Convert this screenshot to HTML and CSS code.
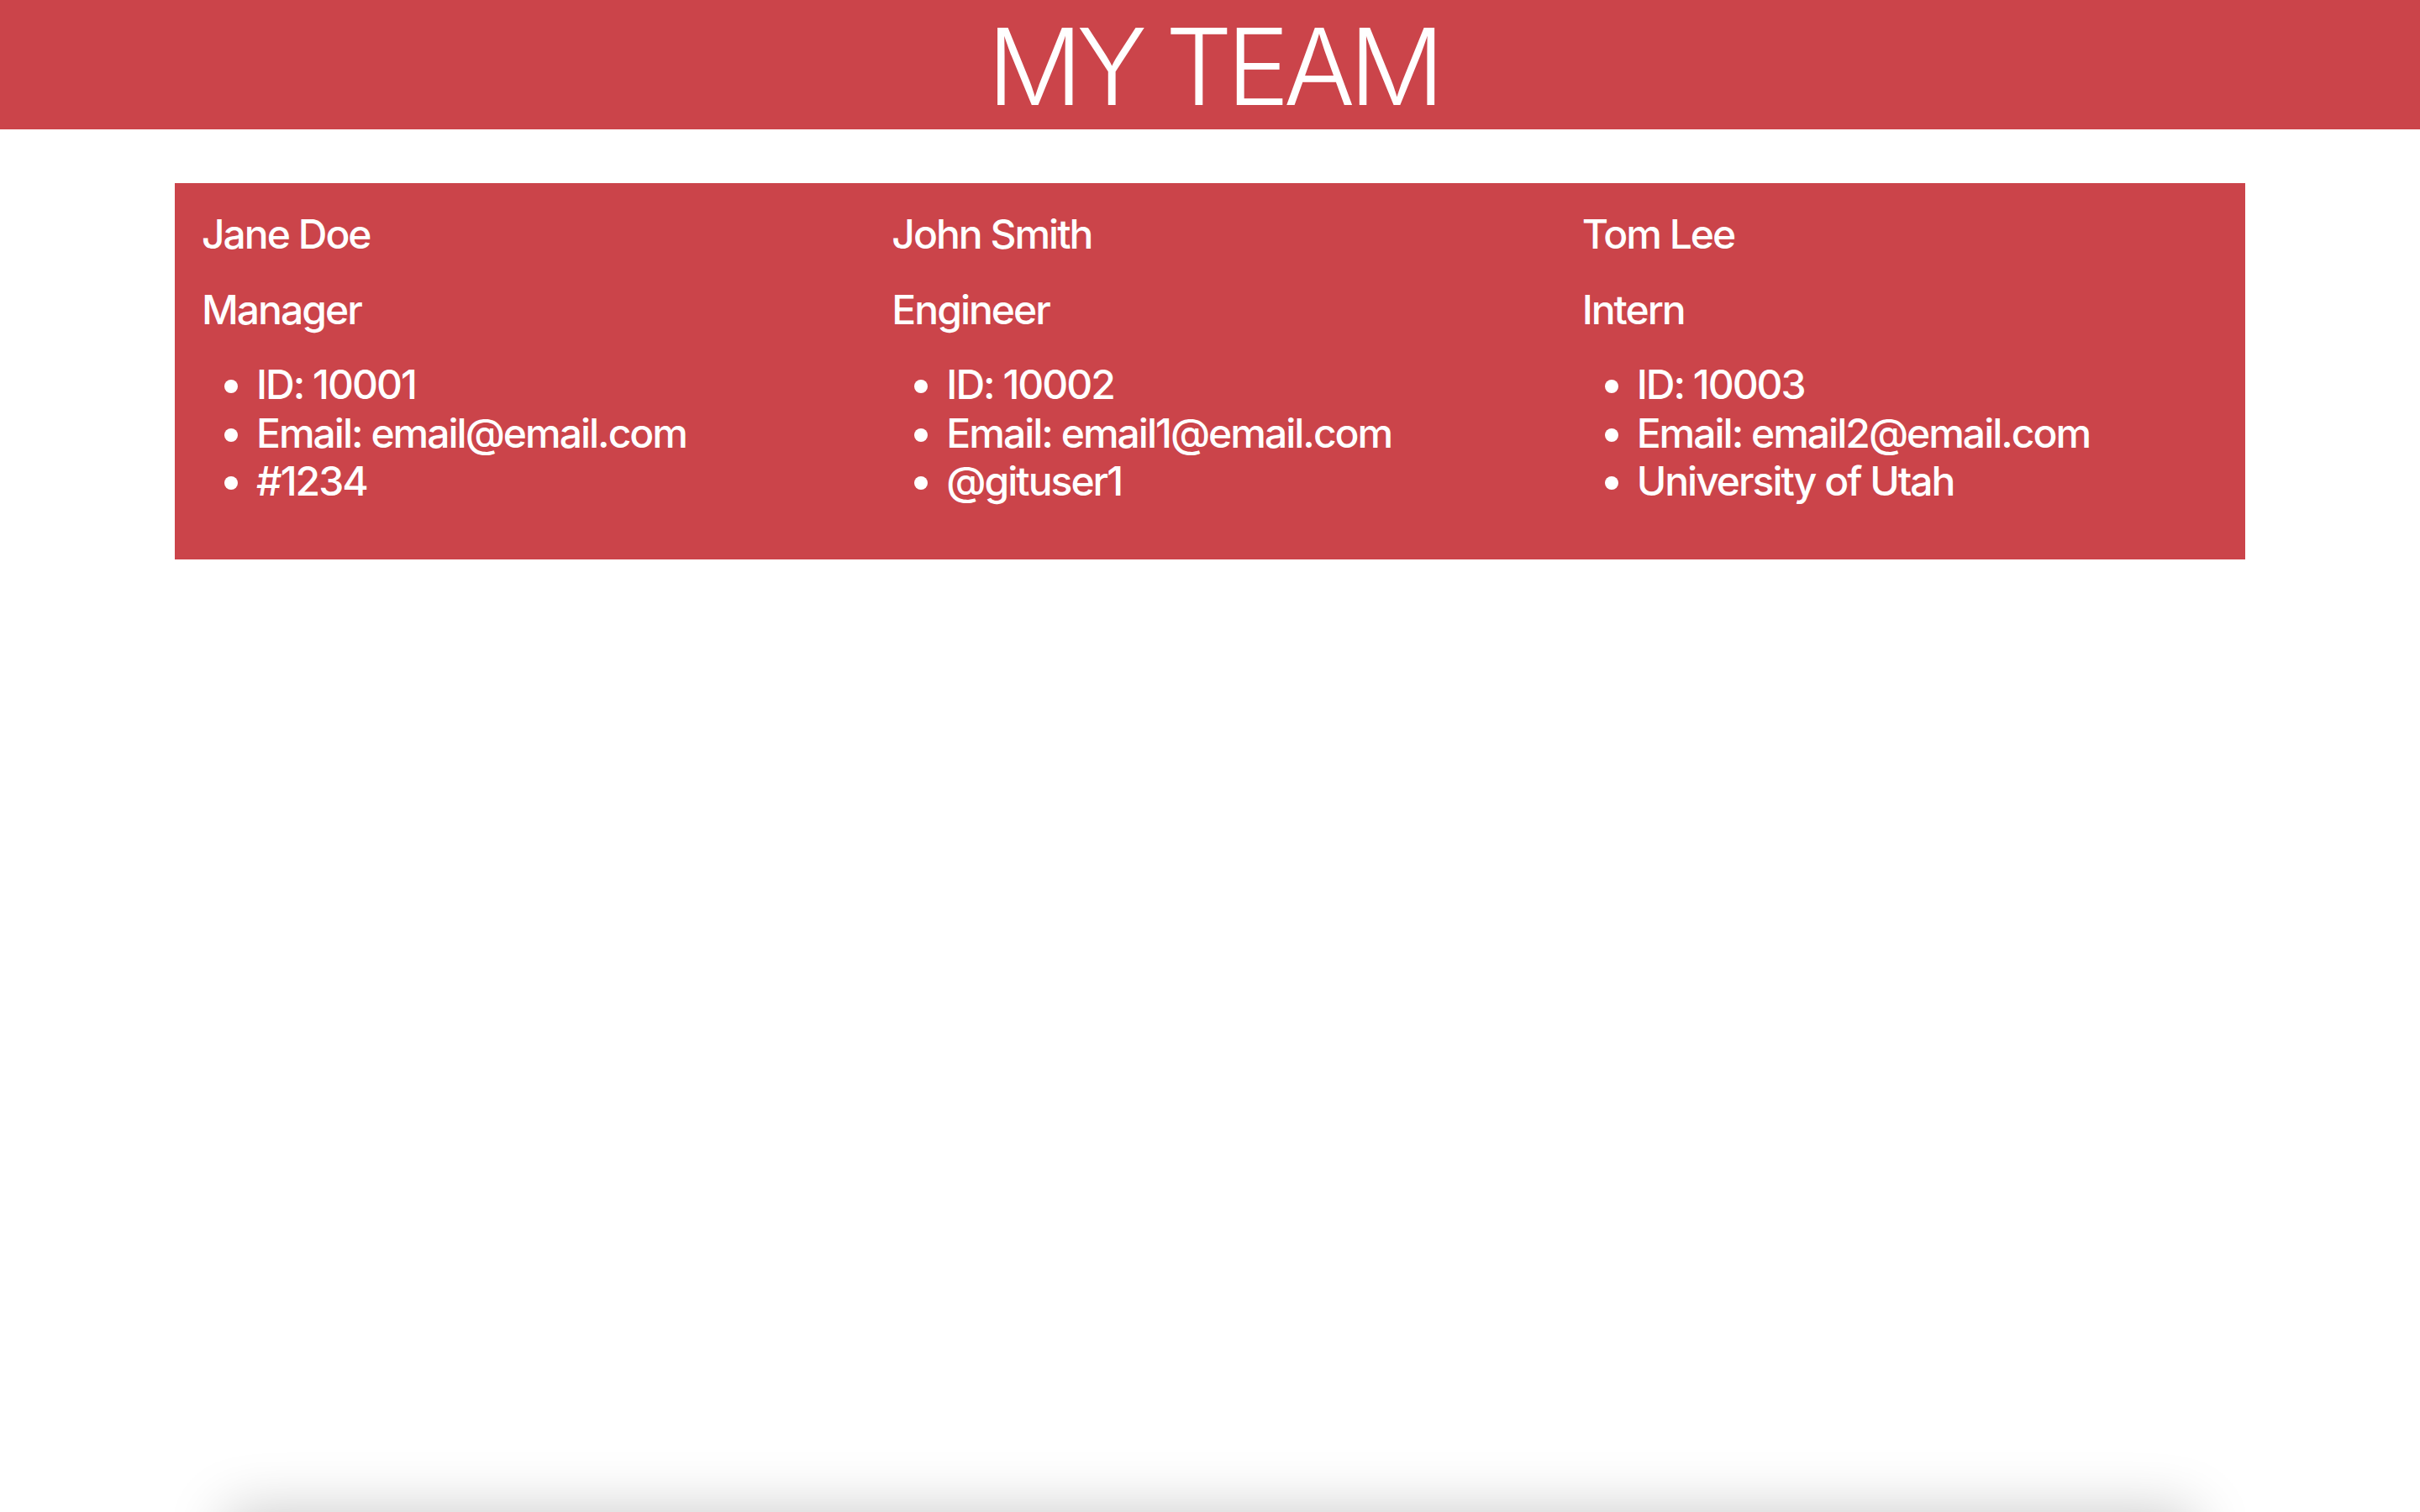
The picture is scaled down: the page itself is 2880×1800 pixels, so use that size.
FILE: index.html
```html
<!DOCTYPE html>
<html lang="en">
<head>
<meta charset="utf-8">
<title>My Team</title>
<link rel="stylesheet" href="styles.css">
</head>
<body>
<header class="banner">
  <h1 class="banner-title">MY TEAM</h1>
</header>
<main class="team">
  <section class="member">
    <h2 class="member-name">Jane Doe</h2>
    <h3 class="member-role">Manager</h3>
    <ul class="member-info">
      <li>ID: 10001</li>
      <li>Email: email@email.com</li>
      <li>#1234</li>
    </ul>
  </section>
  <section class="member">
    <h2 class="member-name">John Smith</h2>
    <h3 class="member-role">Engineer</h3>
    <ul class="member-info">
      <li>ID: 10002</li>
      <li>Email: email1@email.com</li>
      <li>@gituser1</li>
    </ul>
  </section>
  <section class="member">
    <h2 class="member-name">Tom Lee</h2>
    <h3 class="member-role">Intern</h3>
    <ul class="member-info">
      <li>ID: 10003</li>
      <li>Email: email2@email.com</li>
      <li>University of Utah</li>
    </ul>
  </section>
</main>
<footer class="dock"></footer>
</body>
</html>
```
FILE: styles.css
```css
html, body {
  margin: 0;
  padding: 0;
  background: #ffffff;
}
body {
  font-family: Inter, "Open Sans", "Liberation Sans", sans-serif;
  color: #ffffff;
  min-height: 1800px;
  overflow: hidden;
}
.banner {
  background: #cb444a;
  height: 154px;
  display: flex;
  align-items: center;
  justify-content: center;
}
.banner-title {
  margin: 0;
  font-size: 126px;
  font-weight: 300;
  line-height: 1;
  letter-spacing: -7px;
  padding-top: 4px;
  padding-left: 7px;
}
.team {
  margin: 64px 208px 0;
  background: #cb444a;
  display: grid;
  grid-template-columns: repeat(3, 1fr);
}
.member {
  padding: 32px 32px 32px;
  font-size: 48px;
  line-height: 57.6px;
  font-weight: 550;
  letter-spacing: -2px;
}
.member-name,
.member-role {
  margin: 0 0 32px;
  font-size: 48px;
  font-weight: 550;
  line-height: 57.6px;
}
.member-info {
  margin: 0 0 32px;
  padding-left: 65px;
}
.dock {
  position: fixed;
  left: 270px;
  right: 270px;
  bottom: -120px;
  height: 120px;
  background: #ffffff;
  box-shadow: 0 0 70px rgba(0, 0, 0, 0.22);
}
```
